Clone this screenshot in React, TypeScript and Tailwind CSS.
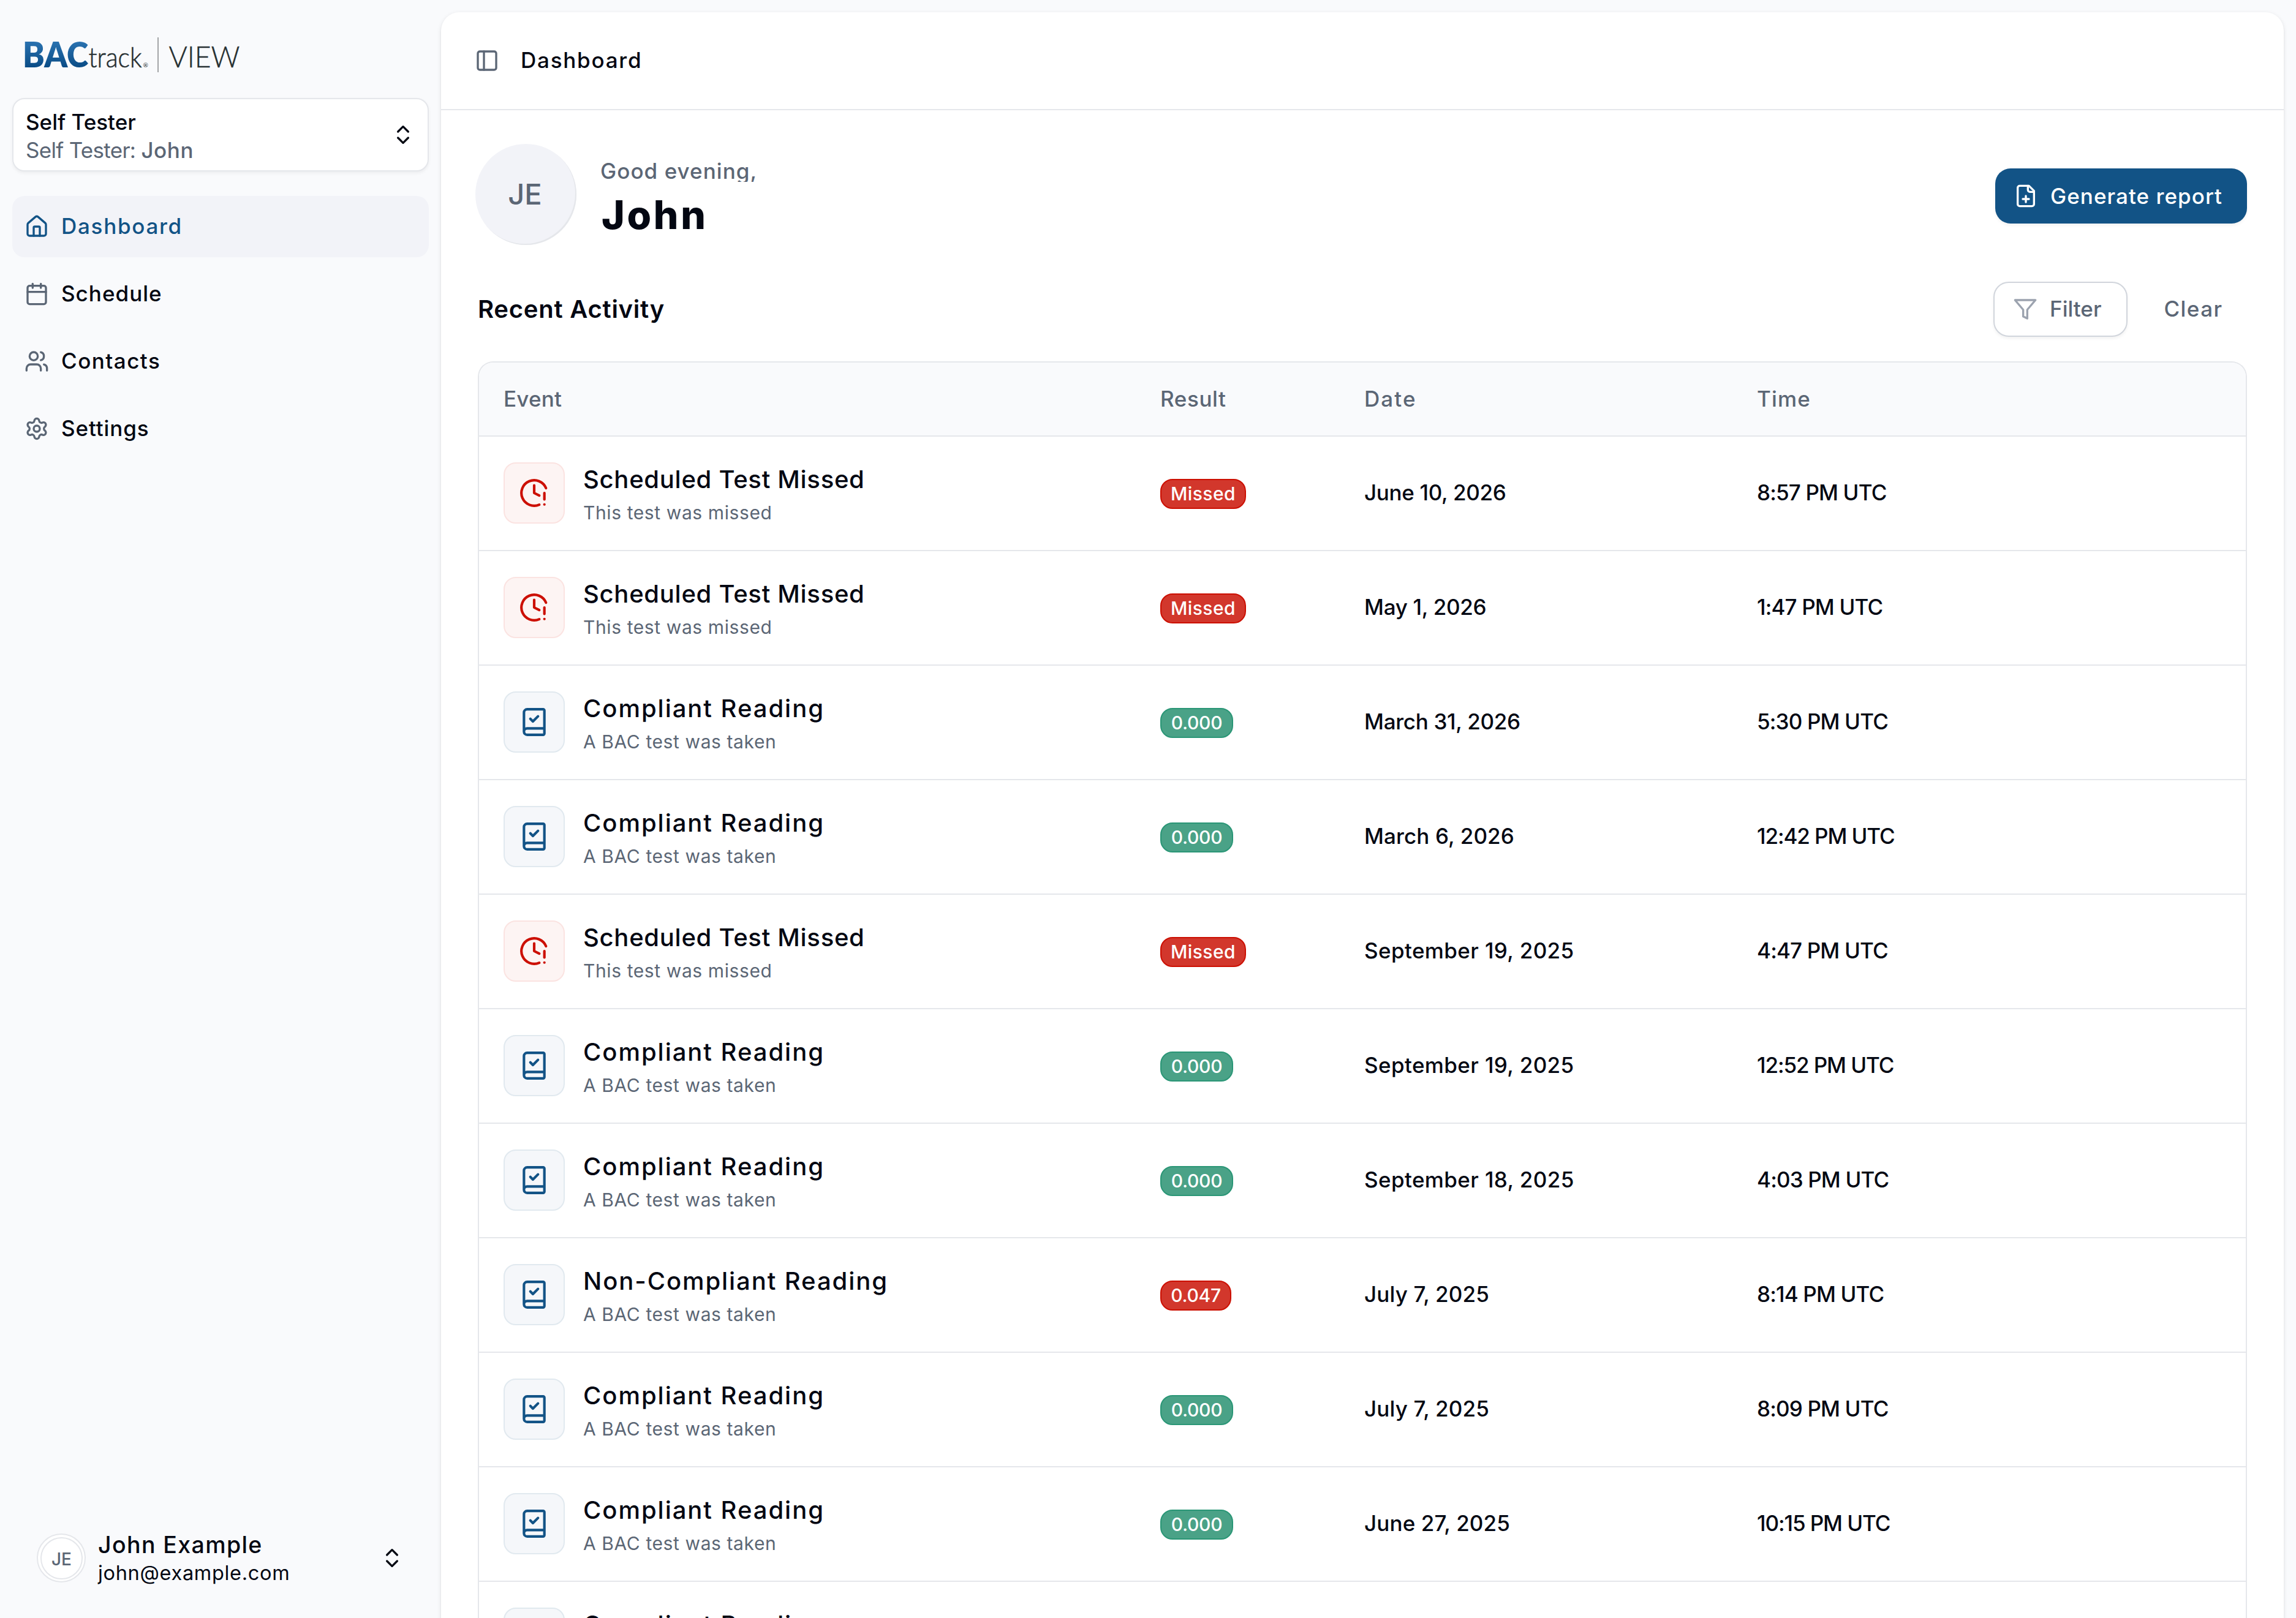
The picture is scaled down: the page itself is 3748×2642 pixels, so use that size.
import {
  BookCheck,
  Calendar,
  ChevronsUpDown,
  ClockAlert,
  House,
  PanelLeft,
  Settings,
  Users,
} from 'lucide-react'
import type { LucideIcon } from 'lucide-react'

type EventKind = 'missed' | 'compliant' | 'nonCompliant'

interface Activity {
  kind: EventKind
  result: string
  date: string
  time: string
}

const activities: Activity[] = [
  { kind: 'missed', result: 'Missed', date: 'June 10, 2026', time: '8:57 PM UTC' },
  { kind: 'missed', result: 'Missed', date: 'May 1, 2026', time: '1:47 PM UTC' },
  { kind: 'compliant', result: '0.000', date: 'March 31, 2026', time: '5:30 PM UTC' },
  { kind: 'compliant', result: '0.000', date: 'March 6, 2026', time: '12:42 PM UTC' },
  { kind: 'missed', result: 'Missed', date: 'September 19, 2025', time: '4:47 PM UTC' },
  { kind: 'compliant', result: '0.000', date: 'September 19, 2025', time: '12:52 PM UTC' },
  { kind: 'compliant', result: '0.000', date: 'September 18, 2025', time: '4:03 PM UTC' },
  { kind: 'nonCompliant', result: '0.047', date: 'July 7, 2025', time: '8:14 PM UTC' },
  { kind: 'compliant', result: '0.000', date: 'July 7, 2025', time: '8:09 PM UTC' },
  { kind: 'compliant', result: '0.000', date: 'June 27, 2025', time: '10:15 PM UTC' },
  { kind: 'compliant', result: '0.000', date: 'June 24, 2025', time: '9:32 PM UTC' },
]

const kinds = {
  missed: {
    title: 'Scheduled Test Missed',
    titleClass: 'tracking-[0.018em]',
    note: 'This test was missed',
    icon: ClockAlert,
    tile: 'border-[#fbe3e1] bg-[#fdf4f3] text-[#cc0f02]',
    badge: 'w-[140px] border-[#cc0f02] bg-[#d2372c] tracking-[0.014em]',
  },
  compliant: {
    title: 'Compliant Reading',
    titleClass: 'tracking-[0.049em]',
    note: 'A BAC test was taken',
    icon: BookCheck,
    tile: 'border-[#e1e9ef] bg-[#f5f7fa] text-[#125386]',
    badge: 'w-[119px] border-[#2a9676] bg-[#4aa287] tracking-[-0.009em]',
  },
  nonCompliant: {
    title: 'Non-Compliant Reading',
    titleClass: 'tracking-[0.048em]',
    note: 'A BAC test was taken',
    icon: BookCheck,
    tile: 'border-[#e1e9ef] bg-[#f5f7fa] text-[#125386]',
    badge: 'w-[116px] border-[#cc0f02] bg-[#d2372c] tracking-[-0.009em]',
  },
}

const navItems: { label: string; icon: LucideIcon; className: string; active?: boolean }[] = [
  { label: 'Dashboard', icon: House, className: 'tracking-[0.049em]', active: true },
  { label: 'Schedule', icon: Calendar, className: 'tracking-[0.029em]' },
  { label: 'Contacts', icon: Users, className: 'tracking-[0.042em]' },
  { label: 'Settings', icon: Settings, className: 'tracking-[0.025em]' },
]

function Logo() {
  return (
    <svg className="ml-5 h-[60px] w-[356px]" viewBox="40 60 356 60" fontFamily="Lato, sans-serif">
      <defs>
        <linearGradient id="bac" x1="0" y1="68" x2="0" y2="110" gradientUnits="userSpaceOnUse">
          <stop offset="0" stopColor="#2a72b0" />
          <stop offset="1" stopColor="#0a4c86" />
        </linearGradient>
      </defs>
      <text x="37" y="109.5" fontSize="57.5" fontWeight="800" fill="url(#bac)" textLength="107" lengthAdjust="spacingAndGlyphs">
        BAC
      </text>
      <text x="144.5" y="109.5" fontSize="45" fontWeight="300" fill="#262f31" stroke="#262f31" strokeWidth="0.6" textLength="87" lengthAdjust="spacingAndGlyphs">
        track
      </text>
      <text x="233.5" y="110" fontSize="10" fill="#262f31">
        ®
      </text>
      <rect x="257" y="61" width="2" height="57" fill="#a3a5a7" />
      <text x="275.5" y="109.5" fontSize="47.5" fontWeight="300" fill="#262f31" stroke="#262f31" strokeWidth="0.4" textLength="116" lengthAdjust="spacingAndGlyphs">
        VIEW
      </text>
    </svg>
  )
}

function FilePlusIcon() {
  return (
    <svg className="size-10" viewBox="0 0 24 24" fill="none" stroke="currentColor" strokeWidth="2" strokeLinecap="round" strokeLinejoin="round">
      <path d="M15 2H6a2 2 0 0 0-2 2v16a2 2 0 0 0 2 2h12a2 2 0 0 0 2-2V7Z" />
      <path d="M14 2v4a2 2 0 0 0 2 2h4" />
      <path d="M9 15h6" />
      <path d="M12 18v-6" />
    </svg>
  )
}

function FunnelIcon() {
  return (
    <svg className="size-10 text-[#9ca3af]" viewBox="0 0 24 24" fill="none" stroke="currentColor" strokeWidth="2" strokeLinecap="round" strokeLinejoin="round">
      <polygon points="22 3 2 3 10 12.46 10 19 14 21 14 12.46 22 3" />
    </svg>
  )
}

function Sidebar() {
  return (
    <aside className="flex h-full w-[720px] shrink-0 flex-col px-5 pt-[60px] pb-[58px]">
      <Logo />

      <button className="mt-10 flex h-[120px] items-center justify-between rounded-[20px] border-2 border-[#e5e7eb] bg-white pr-5 pl-5 text-left shadow-[0_2.5px_5px_rgba(0,0,0,0.05)]">
        <span className="block pt-[3px] text-[35px] leading-[46px]">
          <span className="block font-medium">Self Tester</span>
          <span className="block text-[#5b6675]">
            <span className="tracking-[-0.02em]">Self Tester: </span>
            <span className="font-medium tracking-[0.016em]">John</span>
          </span>
        </span>
        <ChevronsUpDown className="size-10" />
      </button>

      <nav className="mt-10 flex flex-col gap-2.5">
        {navItems.map(({ label, icon: Icon, className, active }) => (
          <a
            key={label}
            className={`flex h-[100px] items-center gap-5 rounded-[20px] px-5 text-[35px] font-medium ${
              active ? 'bg-[#f2f3f8] text-[#125386]' : ''
            }`}
          >
            <Icon className={active ? 'size-10' : 'size-10 text-[#5b6675]'} />
            <span className={`pb-0.5 ${className}`}>{label}</span>
          </a>
        ))}
      </nav>

      <div className="mt-auto flex h-20 items-center px-10">
        <div className="flex size-20 items-center justify-center rounded-full border-2 border-[#e5e7eb] bg-white">
          <div className="flex size-[69px] items-center justify-center rounded-full border-2 border-[#e5e7eb] pt-[3px] pl-px text-[28px] font-medium text-[#5b6675]">
            JE
          </div>
        </div>
        <div className="ml-5 pt-[3px] leading-[46px]">
          <div className="text-[37.5px] font-medium tracking-[0.037em]">John Example</div>
          <div className="text-[32.5px] tracking-[0.021em]">john@example.com</div>
        </div>
        <ChevronsUpDown className="ml-auto size-10" />
      </div>
    </aside>
  )
}

function trackingForDate(date: string) {
  if (date.startsWith('September')) return 'tracking-[0.011em]'
  if (date.startsWith('July') || date.startsWith('June 2')) return 'tracking-[0.004em]'
  return date.startsWith('March 6') ? 'tracking-[0.003em]' : 'tracking-[-0.009em]'
}

function trackingForTime(time: string) {
  return time.length > 11 ? 'tracking-[-0.031em]' : 'tracking-[-0.024em]'
}

function ActivityRow({ activity }: { activity: Activity }) {
  const { title, titleClass, note, icon: Icon, tile, badge } = kinds[activity.kind]
  return (
    <div className="grid h-[187px] grid-cols-[1072px_333px_641px_1fr] items-center border-b-2 border-[#e5e7eb] pl-10 text-[35px] font-medium">
      <div className="flex items-center gap-[30px]">
        <div className={`mb-0.5 flex size-[100px] items-center justify-center rounded-[20px] border-2 ${tile}`}>
          <Icon className="size-[50px]" />
        </div>
        <div className="pt-[3px]">
          <div className={`text-[40px] leading-[56px] ${titleClass}`}>{title}</div>
          <div className="mt-[3px] text-[30px] leading-[46px] font-normal tracking-[0.02em] text-[#5b6675]">{note}</div>
        </div>
      </div>
      <div className="pt-0.5">
        <div className={`flex h-[49px] items-center justify-center rounded-[20px] border-2 text-[30px] text-white ${badge}`}>
          {activity.result}
        </div>
      </div>
      <div className={`pb-0.5 ${trackingForDate(activity.date)}`}>{activity.date}</div>
      <div className={`pb-0.5 ${trackingForTime(activity.time)}`}>{activity.time}</div>
    </div>
  )
}

export default function App() {
  return (
    <div className="flex h-[2642px] w-[3748px] overflow-hidden bg-[#f9fafc] font-['Inter',sans-serif] text-[#030712]">
      <Sidebar />

      <main className="mt-5 h-[2700px] w-[3008px] shrink-0 rounded-[30px] bg-white shadow-[0_2.5px_7.5px_rgba(0,0,0,0.1),0_2.5px_5px_-2.5px_rgba(0,0,0,0.1)]">
        <header className="flex h-40 items-center gap-[35px] border-b-2 border-[#e5e7eb] pl-[55px]">
          <PanelLeft className="size-10 text-[#5b6675]" />
          <h1 className="pb-0.5 text-[35px] font-medium tracking-[0.05em]">Dashboard</h1>
        </header>

        <div className="px-[60px] pt-[55px]">
          <section className="-ml-1 flex h-[165px] items-start">
            <div className="flex size-[165px] items-center justify-center rounded-full bg-[#f2f3f8] pr-[3px] text-[47px] font-medium text-[#5b6675] shadow-[inset_-2px_-2px_0_#e5e7eb]">
              JE
            </div>
            <div className="ml-[39px] pt-[27px]">
              <p className="h-[35px] overflow-hidden text-[35px] leading-none font-medium tracking-[0.03em] text-[#5b6675]">
                Good evening,
              </p>
              <p className="mt-[22px] ml-0.5 text-[64px] leading-none font-extrabold tracking-[0.058em]">John</p>
            </div>
            <button className="mt-10 ml-auto flex h-[90px] w-[411px] items-center gap-5 rounded-[25px] bg-[#125386] pl-[30px] text-[35px] font-medium tracking-[0.03em] text-white shadow-[0_2.5px_5px_rgba(0,0,0,0.05)]">
              <FilePlusIcon />
              Generate report
            </button>
          </section>

          <section className="mt-[60px] flex h-[90px] items-center">
            <h2 className="text-[40px] font-semibold tracking-[0.019em]">Recent Activity</h2>
            <div className="ml-auto flex gap-5 text-[35px] font-medium text-[#5b6675]">
              <button className="flex h-[90px] w-[219px] items-center gap-5 rounded-[25px] border-2 border-[#d1d5dc] bg-white pl-[30px] shadow-[0_2.5px_5px_rgba(0,0,0,0.05)]">
                <FunnelIcon />
                <span className="pb-0.5">Filter</span>
              </button>
              <button className="h-[90px] w-[175px] rounded-[25px] pb-0.5 tracking-[0.041em]">Clear</button>
            </div>
          </section>

          <section className="mt-10 overflow-hidden rounded-t-[25px] border-2 border-b-0 border-[#e5e7eb]">
            <div className="grid h-[121px] grid-cols-[1072px_333px_641px_1fr] items-center border-b-2 border-[#e5e7eb] bg-[#f9fafc] pl-10 text-[35px] font-medium text-[#5b6675]">
              <span className="tracking-[0.006em]">Event</span>
              <span className="tracking-[0.017em]">Result</span>
              <span className="tracking-[0.06em]">Date</span>
              <span className="tracking-[0.034em]">Time</span>
            </div>
            {activities.map((activity, i) => (
              <ActivityRow key={i} activity={activity} />
            ))}
          </section>
        </div>
      </main>
    </div>
  )
}
